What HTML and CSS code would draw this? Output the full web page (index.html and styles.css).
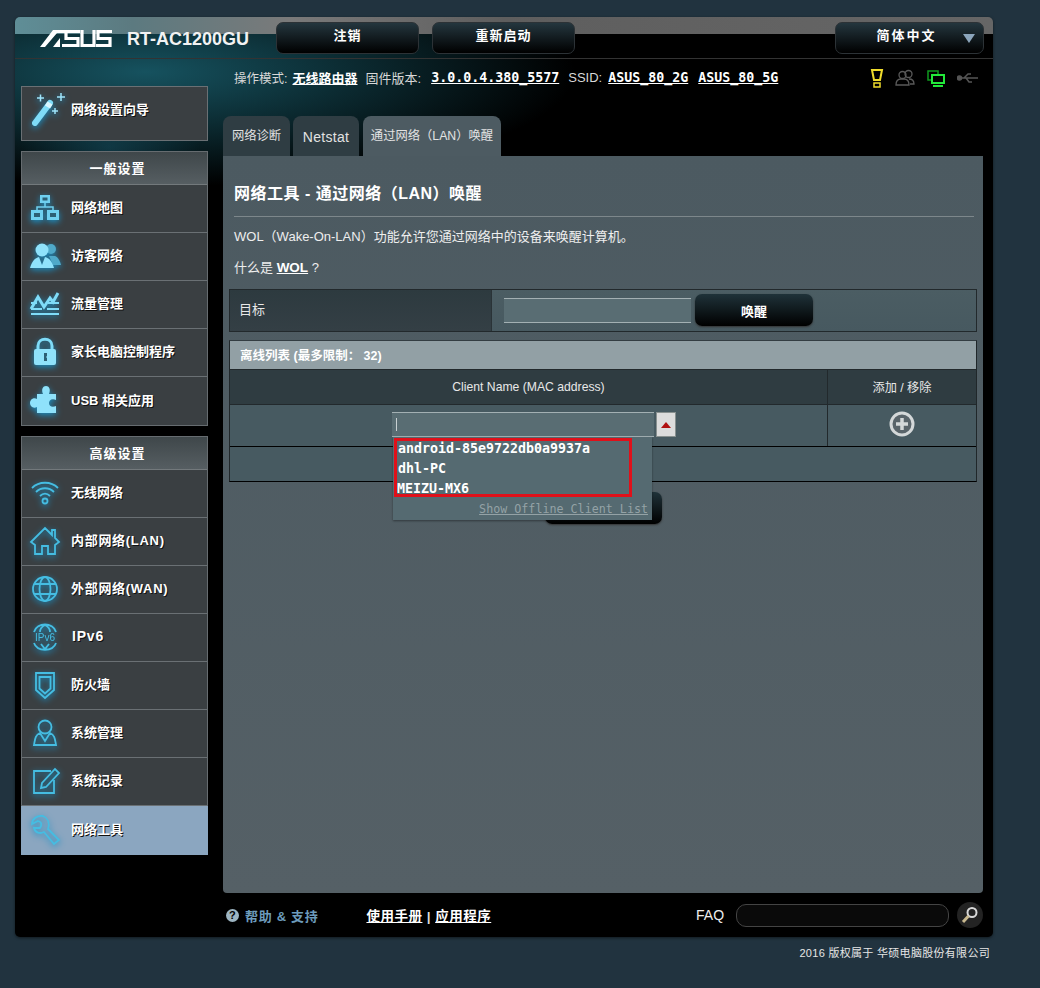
FILE: index.html
```html
<!DOCTYPE html>
<html lang="zh-CN">
<head>
    <meta charset="UTF-8">
    <title>RT-AC1200GU</title>
    <link rel="stylesheet" href="styles.css">
</head>
<body>
    <div class="frame">
        <div class="banner">
            <svg class="logo" viewBox="0 0 72 17" width="72" height="17">
                <path d="M0 17 L13 0 H27 V3 H17 L5 17Z M13 17 L20 8 V17Z" fill="#fff"/>
                <path d="M40 1.500 H26 V8.500 H38 V15.500 H22 M42 0 V15.500 H54 V0 M72 1.500 H58 V8.500 H70 V15.500 H56" fill="none" stroke="#fff" stroke-width="3.200"/>
            </svg>
            <span class="model">RT-AC1200GU</span>
            <div class="top-btn">注销</div>
            <div class="top-btn">重新启动</div>
            <div class="lang-btn">
                <span>简体中文</span>
                <i class="lang-arrow"></i>
            </div>
        </div>

        <div class="columns">
            <div class="side">
                <div class="wizard">
                    <svg class="icon" viewBox="0 0 36 36" width="36" height="36">
                        <path d="M4 32 L19 12" stroke="#7fdcf8" stroke-width="6" stroke-linecap="round"/>
                        <path d="M16.500 16 L19 12" stroke="#d8f6ff" stroke-width="6"/>
                        <path d="M6 7 H13 M9.500 3.500 V10.500 M26 6 H34 M30 2 V10 M21 20 H27 M24 17 V23" stroke="#9fe4fa" stroke-width="1.500"/>
                    </svg>
                    <span class="side-label">网络设置向导</span>
                </div>

                <div class="group">
                    <div class="group-head">一般设置</div>
                    <div class="item">
                        <svg class="icon" viewBox="0 0 32 32" width="32" height="32">
                            <path d="M11 3 H21 V11 H11Z M2 18 H14 V28 H2Z M18 18 H30 V28 H18Z" fill="#6fd0f0"/>
                            <path d="M13.500 5.500 H18.500 V8.500 H13.500Z M5 21 H11 V25 H5Z M21 21 H27 V25 H21Z" fill="#2c5f75"/>
                            <path d="M16 11 V15 M8 18 V15 H24 V18" fill="none" stroke="#6fd0f0" stroke-width="1.500"/>
                        </svg>
                        <span class="side-label">网络地图</span>
                    </div>
                    <div class="item">
                        <svg class="icon" viewBox="0 0 32 32" width="32" height="32">
                            <circle cx="22" cy="9" r="5" fill="#4fa9c9"/>
                            <path d="M20 16 H26 C29 17 31 21 32 25 H24Z" fill="#4fa9c9"/>
                            <circle cx="13" cy="10" r="6.500" fill="#8fe2fb"/>
                            <path d="M1 28 C3 21 6 18 10 17 L13 25 L16 17 C20 18 23 21 25 28Z" fill="#8fe2fb"/>
                        </svg>
                        <span class="side-label">访客网络</span>
                    </div>
                    <div class="item">
                        <svg class="icon" viewBox="0 0 32 32" width="32" height="32">
                            <path d="M2 21 L9 9 L15 19 L21 10 L24 14 L29 5" fill="none" stroke="#7fdcf8" stroke-width="3"/>
                            <path d="M2 15 H8 M19 15 H30 M2 21 H13 M18 21 H30 M2 26 H30" stroke="#7fdcf8" stroke-width="2"/>
                        </svg>
                        <span class="side-label">流量管理</span>
                    </div>
                    <div class="item">
                        <svg class="icon" viewBox="0 0 32 32" width="32" height="32">
                            <path d="M9 14 V10 C9 1 23 1 23 10 V14" fill="none" stroke="#7fdcf8" stroke-width="3"/>
                            <rect x="5" y="13" width="22" height="16" rx="2" fill="#8fe2fb"/>
                            <path d="M15 17 H18 V20 L17 21 L18 22 V25 H15Z" fill="#2c5f75"/>
                        </svg>
                        <span class="side-label">家长电脑控制程序</span>
                    </div>
                    <div class="item">
                        <svg class="icon" viewBox="0 0 32 32" width="32" height="32">
                            <path d="M8 10 H14 C12 5 14 2 17 2 C20 2 22 5 20 10 H27 V16 C22 14 20 17 20 19 C20 22 23 24 27 22 V29 H8 V23 C4 25 1 22 1 19 C1 16 4 13 8 15Z" fill="#8fe2fb"/>
                        </svg>
                        <span class="side-label">USB 相关应用</span>
                    </div>
                </div>

                <div class="group">
                    <div class="group-head">高级设置</div>
                    <div class="item">
                        <svg class="icon line-icon" viewBox="0 0 32 32" width="32" height="32">
                            <path d="M3 11 C10 4 22 4 29 11 M7 15 C12 10 20 10 25 15 M11 19 C14 16 18 16 21 19"/>
                            <circle cx="16" cy="24" r="2.500"/>
                        </svg>
                        <span class="side-label">无线网络</span>
                    </div>
                    <div class="item">
                        <svg class="icon line-icon" viewBox="0 0 32 32" width="32" height="32">
                            <path d="M2 17 L16 3 L23 10 V5 H26 V13 L30 17 L26 20 V29 H19 V21 H13 V29 H6 V20Z"/>
                        </svg>
                        <span class="side-label latin-label">内部网络(LAN)</span>
                    </div>
                    <div class="item">
                        <svg class="icon line-icon" viewBox="0 0 32 32" width="32" height="32">
                            <circle cx="16" cy="16" r="12"/>
                            <ellipse cx="16" cy="16" rx="5.500" ry="12"/>
                            <path d="M5 11 H27 M5 21 H27"/>
                        </svg>
                        <span class="side-label latin-label">外部网络(WAN)</span>
                    </div>
                    <div class="item">
                        <svg class="icon line-icon" viewBox="0 0 32 32" width="32" height="32">
                            <path d="M5 11 C8 1 24 1 27 11 M5 22 C8 31 24 31 27 22 M16 4 C12 6 11 9 11 11 M16 4 C20 6 21 9 21 11 M12 23 L16 28 L20 23"/>
                            <text class="ipv6-mark" x="16" y="20" text-anchor="middle">IPv6</text>
                        </svg>
                        <span class="side-label ipv6-label">IPv6</span>
                    </div>
                    <div class="item">
                        <svg class="icon line-icon" viewBox="0 0 32 32" width="32" height="32">
                            <path d="M7 4 H25 V21 L16 29 L7 21Z"/>
                            <path d="M10.500 8 H21.500 V19.500 L16 24.500 L10.500 19.500Z"/>
                        </svg>
                        <span class="side-label">防火墙</span>
                    </div>
                    <div class="item">
                        <svg class="icon line-icon" viewBox="0 0 32 32" width="32" height="32">
                            <circle cx="16" cy="10" r="6.500"/>
                            <path d="M11 16 C6 18 6 23 5 28 H27 C26 23 26 18 21 16 L16 24Z"/>
                        </svg>
                        <span class="side-label">系统管理</span>
                    </div>
                    <div class="item">
                        <svg class="icon line-icon" viewBox="0 0 32 32" width="32" height="32">
                            <path d="M25 15 V28 H5 V6 H22"/>
                            <path d="M12 23 L13 18 L26 4 L30 8 L17 22Z"/>
                        </svg>
                        <span class="side-label">系统记录</span>
                    </div>
                    <div class="item item-on">
                        <svg class="icon line-icon" viewBox="0 0 32 32" width="32" height="32">
                            <path d="M14 2 C8 1 3 5 3 10 L9 7 C13 8 13 11 11 14 L5 14 C6 19 11 20 15 18 L25 30 L30 26 L19 15 C21 9 19 4 14 2Z"/>
                        </svg>
                        <span class="side-label">网络工具</span>
                    </div>
                </div>
            </div>

            <div class="content">
                <div class="status">
                    <span class="status-label">操作模式:</span>
                    <a class="status-link">无线路由器</a>
                    <span class="status-gap">固件版本:</span>
                    <a class="status-code fw-code">3.0.0.4.380_5577</a>
                    <span class="status-gap ssid">SSID:</span>
                    <a class="status-code">ASUS_80_2G</a>
                    <a class="status-code ssid-two">ASUS_80_5G</a>
                    <div class="status-icons">
                        <svg viewBox="0 0 14 20" width="14" height="20">
                            <path d="M2 2 H12 L10 12 H4Z" fill="none" stroke="#f0dc2c" stroke-width="2"/>
                            <rect x="4" y="15" width="6" height="4" fill="none" stroke="#f0dc2c" stroke-width="1.500"/>
                        </svg>
                        <svg viewBox="0 0 20 18" width="20" height="18" fill="none" stroke="#5a5a5a" stroke-width="1.300">
                            <circle cx="7.500" cy="6" r="3.500"/>
                            <circle cx="13.500" cy="5" r="3.500"/>
                            <path d="M1 16 C1 11 4 10 6 10 H9 C12 10 14 12 14 16Z M14 10 C17 10 19 12 19 15 H15"/>
                        </svg>
                        <svg viewBox="0 0 20 18" width="20" height="18" fill="none">
                            <path d="M6 11 H2 V2 H12 V5" stroke="#0f9a1f" stroke-width="1.500"/>
                            <rect x="6" y="6" width="12" height="8" stroke="#22e83a" stroke-width="2"/>
                            <path d="M7 17 H17" stroke="#22e83a" stroke-width="2"/>
                        </svg>
                        <svg viewBox="0 0 22 14" width="22" height="14" fill="none" stroke="#555" stroke-width="1.500">
                            <path d="M3 7 H21 M7 7 L11 3 H14 M9 7 L12 11 H15"/>
                            <circle cx="2.500" cy="7" r="2" fill="#555"/>
                        </svg>
                    </div>
                </div>

                <div class="tabs">
                    <div class="tab">网络诊断</div>
                    <div class="tab tab-net">Netstat</div>
                    <div class="tab tab-on">通过网络（LAN）唤醒</div>
                </div>

                <div class="panel">
                    <h1 class="title">网络工具 - 通过网络（LAN）唤醒</h1>
                    <div class="rule"></div>
                    <p class="intro">WOL（Wake-On-LAN）功能允许您通过网络中的设备来唤醒计算机。</p>
                    <p class="intro what">什么是 <a class="wol-link">WOL</a> ?</p>

                    <div class="target-row">
                        <div class="target-name">目标</div>
                        <div class="target-field">
                            <div class="field target-input"></div>
                            <div class="wake-btn">唤醒</div>
                        </div>
                    </div>

                    <div class="list">
                        <div class="list-title">离线列表 (最多限制： 32)</div>
                        <div class="list-head">
                            <div class="col-main">Client Name (MAC address)</div>
                            <div class="col-side">添加 / 移除</div>
                        </div>
                        <div class="list-entry">
                            <div class="col-main entry-main">
                                <div class="field client-input"><i class="caret"></i></div>
                                <div class="drop-btn"><i class="drop-arrow"></i></div>
                                <div class="drop">
                                    <div class="drop-item">android-85e9722db0a9937a</div>
                                    <div class="drop-item">dhl-PC</div>
                                    <div class="drop-item meizu">MEIZU-MX6</div>
                                    <a class="drop-offline">Show Offline Client List</a>
                                    <div class="mark"></div>
                                </div>
                            </div>
                            <div class="col-side">
                                <svg class="add-icon" viewBox="0 0 26 26" width="26" height="26">
                                    <circle cx="13" cy="13" r="11" fill="#59646a" stroke="#d4d8d9" stroke-width="3"/>
                                    <path d="M13 7 V19 M7 13 H19" stroke="#d4d8d9" stroke-width="3.500"/>
                                </svg>
                            </div>
                        </div>
                        <div class="list-empty"></div>
                    </div>

                    <div class="apply-btn"></div>
                </div>

                <div class="foot">
                    <span class="help-dot">?</span>
                    <span class="help-text">帮助 &amp; 支持</span>
                    <span class="foot-links"><a>使用手册</a> | <a>应用程序</a></span>
                    <span class="faq">FAQ</span>
                    <div class="faq-input"></div>
                    <div class="faq-search">
                        <svg viewBox="0 0 26 26" width="26" height="26" fill="none">
                            <circle cx="15" cy="10.500" r="4.500" stroke="#d8d8d8" stroke-width="2"/>
                            <path d="M11.500 14 L6 20" stroke="#c9b98f" stroke-width="3"/>
                        </svg>
                    </div>
                </div>
            </div>
        </div>
    </div>
    <div class="copyright">2016 版权属于 华硕电脑股份有限公司</div>
</body>
</html>
```

FILE: styles.css
```css
* {
    box-sizing: border-box;
}
body {
    margin: 0;
    background-color: #21333f;
    color: #fff;
    font-family: "Liberation Sans", "Noto Sans CJK SC", sans-serif;
    font-size: 13px;
}
.frame {
    width: 978px;
    height: 920px;
    margin: 17px 0 0 15px;
    border-radius: 5px;
    box-shadow: 0 1px 3px rgba(0, 0, 0, 0.5);
    background:
        linear-gradient(90deg, #5f8e97, #5c7a80 12%, #7a7a7a 28%, #5e5e5e 50%, #666 100%) 0 0 / 100% 17px no-repeat,
        radial-gradient(ellipse 430px 115px at 130px 55px, #16525f, rgba(10, 40, 50, 0) 100%),
        radial-gradient(ellipse 90px 60px at 95px 130px, #0c2a35, rgba(10, 40, 50, 0) 100%),
        #000;
}

/* top banner */
.banner {
    display: flex;
    align-items: flex-start;
    height: 42px;
    border-bottom: 1px solid #333;
}
.logo {
    margin: 13px 0 0 25px;
}
.model {
    width: 149px;
    margin: 12px 0 0 15px;
    font-size: 18px;
    font-weight: bold;
    color: #f2f2f2;
}
.top-btn, .lang-btn {
    display: flex;
    align-items: center;
    justify-content: center;
    height: 32px;
    margin-top: 5px;
    border: 1px solid #2c3236;
    border-radius: 7px;
    background: linear-gradient(#24363e, #000);
    font-weight: bold;
    letter-spacing: 1px;
}
.top-btn {
    width: 143px;
    margin-right: 13px;
    padding-bottom: 8px;
}
.lang-btn {
    position: relative;
    width: 149px;
    margin-left: 247px;
    padding: 0 6px 8px 0;
    letter-spacing: 2px;
}
.lang-arrow {
    position: absolute;
    right: 8px;
    top: 11px;
    border-left: 6px solid transparent;
    border-right: 6px solid transparent;
    border-top: 9px solid #8ba5bb;
}

.columns {
    display: flex;
}

/* left menu */
.side {
    width: 187px;
    margin-left: 6px;
    padding-top: 27px;
}
.wizard {
    display: flex;
    align-items: center;
    height: 55px;
    padding: 0 0 10px 9px;
    margin-bottom: 10px;
    border: 1px solid #6a7074;
    background-color: #3a3f42;
}
.wizard .icon {
    margin-right: 4px;
    margin-top: 0;
}
.group {
    margin-bottom: 10px;
    border: 1px solid #666c70;
    background-color: #3a3f42;
}
.group:last-child {
    border-bottom: 0;
}
.group-head {
    display: flex;
    align-items: center;
    justify-content: center;
    height: 33px;
    padding: 0 0 2px 6px;
    border-bottom: 1px solid #73797c;
    background: linear-gradient(#3f474a, #565e62);
    font-weight: bold;
    letter-spacing: 1px;
}
.item {
    display: flex;
    align-items: center;
    height: 48px;
    padding: 0 0 4px 7px;
    border-bottom: 1px solid #6a7074;
}
.item:last-child {
    border-bottom: 0;
}
.group > .item-on {
    height: 49px;
    margin: 0 -1px;
    padding-left: 8px;
    background-color: #8ba6c0;
}
.icon {
    flex: none;
    margin-right: 10px;
    margin-top: 2px;
    filter: drop-shadow(0 2px 3px #1a90c4);
}
.line-icon {
    fill: none;
    stroke: #45bde2;
    stroke-width: 1.800;
}
.ipv6-mark {
    font-size: 10px;
    fill: #45bde2;
    stroke: none;
    font-family: "Liberation Sans", sans-serif;
}
.side-label {
    font-weight: bold;
    color: #fff;
    text-shadow: 1px 1px 0 #111;
    white-space: nowrap;
}
.latin-label {
    letter-spacing: 0.7px;
}
.ipv6-label {
    font-size: 14px;
    letter-spacing: 0.8px;
    margin-left: 1px;
    padding-top: 1px;
}

/* right side */
.content {
    width: 760px;
    margin-left: 15px;
}
.status {
    display: flex;
    align-items: center;
    height: 37px;
    padding: 0 0 0 11px;
    font-size: 13px;
    color: #d8d8d8;
    white-space: nowrap;
}
.status-label {
    font-size: 12.500px;
}
.status-link {
    margin-left: 5px;
    color: #fff;
    font-weight: bold;
    text-decoration: underline;
}
.status-gap {
    margin-left: 8px;
}
.status-code {
    font-family: "DejaVu Sans Mono", monospace;
    font-size: 13.300px;
    font-weight: bold;
    color: #fff;
    text-decoration: underline;
}
.fw-code {
    margin-left: 10px;
}
.ssid {
    margin-left: 9px;
    margin-right: 6px;
}
.ssid-two {
    margin-left: 10px;
}
.status-icons {
    display: flex;
    flex: none;
    align-items: center;
    gap: 11px;
    margin-left: 92px;
}
.tabs {
    display: flex;
    align-items: flex-end;
    gap: 3px;
    height: 60px;
}
.tab {
    width: 67px;
    height: 40px;
    padding-top: 11px;
    text-align: center;
    border-radius: 8px 8px 0 0;
    background-color: #2f3d43;
    color: #e2e2e2;
    font-size: 12.300px;
    line-height: 18px;
}
.tab-net {
    width: 66px;
    padding-top: 12px;
    font-size: 14px;
    letter-spacing: 0.3px;
}
.tab-on {
    width: 138px;
    margin-left: 1px;
    background-color: #4d5b62;
}
.panel {
    height: 737px;
    padding: 27px 6px 0;
    border-radius: 0 0 4px 4px;
    background: linear-gradient(#4c5a61, #556066);
}
.title {
    margin: 0 5px;
    font-size: 16px;
    line-height: 22px;
    font-weight: bold;
    letter-spacing: 0.5px;
    color: #fff;
}
.rule {
    height: 1px;
    margin: 11px 3px 10px 5px;
    background-color: #7d878b;
}
.intro {
    margin: 0 5px 12px;
    font-size: 13px;
    line-height: 19px;
    color: #eee;
}
.what {
    margin-bottom: 12px;
}
.wol-link {
    font-weight: bold;
    font-size: 13.500px;
    text-decoration: underline;
    color: #fff;
}

.target-row {
    display: flex;
    height: 43px;
    border: 1px solid #22292c;
}
.target-name {
    width: 262px;
    padding: 9px 9px;
    background: linear-gradient(#2d3a3f, #343f45);
    border-right: 1px solid #2a3337;
    color: #e8e8e8;
}
.target-field {
    display: flex;
    align-items: center;
    flex: 1;
    padding-left: 12px;
    background: linear-gradient(#4b5d63, #475960);
}
.field {
    height: 25px;
    border-top: 1px solid #a3b0b3;
    border-bottom: 1px solid #a3b0b3;
    background-color: #596d73;
}
.target-input {
    width: 187px;
}
.wake-btn {
    display: flex;
    align-items: center;
    justify-content: center;
    width: 118px;
    height: 32px;
    margin-left: 4px;
    margin-top: -1px;
    border-radius: 7px;
    background: linear-gradient(#1f3239, #000);
    box-shadow: 0 1px 2px #333;
    font-weight: bold;
}

.list {
    margin-top: 8px;
    border: 1px solid #20272a;
    border-top-color: #333d42;
    border-bottom-color: #000;
}
.list-title {
    display: flex;
    align-items: center;
    height: 28px;
    padding: 0 0 2px 10px;
    background-color: #92a0a5;
    font-size: 12.500px;
    font-weight: bold;
    color: #fff;
    white-space: pre;
}
.list-head {
    display: flex;
    height: 35px;
    border-top: 1px solid #22292c;
    background-color: #2f3c41;
    font-size: 12.200px;
    color: #e8e8e8;
}
.list-entry {
    display: flex;
    height: 43px;
    border-top: 1px solid #22292c;
    border-bottom: 1px solid #000;
    background-color: #475a61;
}
.col-main {
    display: flex;
    align-items: center;
    justify-content: center;
    width: 598px;
    border-right: 1px solid #22292c;
}
.col-side {
    display: flex;
    align-items: center;
    justify-content: center;
    flex: 1;
}
.add-icon {
    margin-top: -4px;
}
.entry-main {
    position: relative;
    justify-content: flex-start;
    padding: 0 0 2px 162px;
}
.client-input {
    position: relative;
    width: 262px;
}
.caret {
    position: absolute;
    left: 4px;
    top: 5px;
    width: 1px;
    height: 13px;
    background-color: #c8d0d2;
}
.drop-btn {
    display: flex;
    align-items: center;
    justify-content: center;
    width: 20px;
    height: 25px;
    margin-left: 2px;
    border: 1px solid #88908f;
    background-color: #dcdcdc;
}
.drop-arrow {
    border-left: 5px solid transparent;
    border-right: 5px solid transparent;
    border-bottom: 6px solid #b01010;
}
.drop {
    position: absolute;
    z-index: 2;
    left: 163px;
    top: 32px;
    width: 259px;
    height: 83px;
    padding: 2px 4px 0 5px;
    background-color: #556a71;
    box-shadow: 0 1px 2px rgba(0, 0, 0, 0.4);
    font-family: "DejaVu Sans Mono", monospace;
}
.drop-item {
    height: 20px;
    font-size: 13.300px;
    line-height: 20px;
    font-weight: bold;
    color: #fff;
}
.meizu {
    margin-left: -1px;
}
.drop-offline {
    display: block;
    font-size: 11.700px;
    line-height: 20px;
    text-align: right;
    text-decoration: underline;
    color: #94a2a6;
}
.mark {
    position: absolute;
    left: 1px;
    top: 1px;
    width: 238px;
    height: 59px;
    border: 3px solid #e0101a;
}
.list-empty {
    height: 34px;
    background-color: #475a61;
}
.apply-btn {
    width: 117px;
    height: 32px;
    margin: 10px auto 0;
    border-radius: 7px;
    background: linear-gradient(#1f3239, #000);
    box-shadow: 0 1px 2px #333;
}

/* footer */
.foot {
    display: flex;
    align-items: center;
    height: 44px;
    padding-left: 3px;
}
.help-dot {
    display: flex;
    align-items: center;
    justify-content: center;
    width: 13px;
    height: 13px;
    border-radius: 50%;
    background-color: #9db5c2;
    color: #000;
    font-size: 11px;
    font-weight: bold;
}
.help-text {
    width: 122px;
    margin-left: 6px;
    color: #6d9cbc;
    font-weight: bold;
    letter-spacing: 0.7px;
}
.foot-links {
    width: 331px;
    font-size: 13.500px;
    font-weight: bold;
    letter-spacing: 0.5px;
    color: #ddd;
}
.foot-links a {
    color: #fff;
    text-decoration: underline;
}
.faq {
    width: 40px;
    font-size: 14px;
    color: #eee;
    margin-bottom: 1px;
}
.faq-input {
    width: 214px;
    height: 23px;
    border: 1px solid #444;
    border-radius: 10px;
    background-color: #0a0a0a;
}
.faq-search {
    width: 26px;
    height: 26px;
    margin-left: 8px;
    border-radius: 50%;
    background-color: #232323;
}
.copyright {
    width: 990px;
    margin-top: 7px;
    text-align: right;
    font-size: 11px;
    letter-spacing: 0.3px;
    color: #e6e6e6;
}
```
